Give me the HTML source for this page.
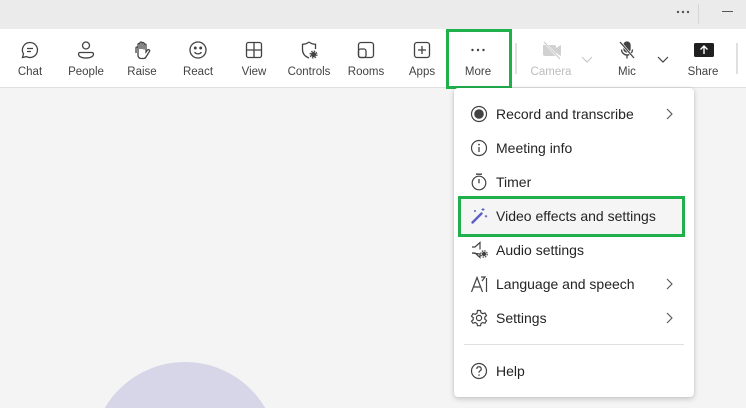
<!DOCTYPE html>
<html><head><meta charset="utf-8"><style>
*{margin:0;padding:0;box-sizing:border-box}
html,body{width:746px;height:408px;overflow:hidden}
body{background:#f4f4f4;font-family:"Liberation Sans",sans-serif;position:relative;color:#242424}
.wrap{position:absolute;left:0;top:0;width:746px;height:408px;overflow:hidden}
.top{position:absolute;left:0;top:0;width:746px;height:29px;background:#ebebeb}
.tb{position:absolute;left:0;top:29px;width:746px;height:59px;background:#fff;border-bottom:1px solid #e0e0e0}
.btn{position:absolute;top:29px;width:56px;height:59px;text-align:center}
.btn svg{position:absolute;left:18px;top:11px}
.btn span{position:absolute;left:0;right:0;top:37px;font-size:11.5px;color:#424242}
.cclip{position:absolute;left:92px;top:362px;width:186px;height:46px;overflow:hidden}
.circle{position:absolute;left:0;top:0;width:186px;height:186px;border-radius:50%;background:#d7d5e8}
.menu{position:absolute;left:454px;top:88px;width:240px;height:309px;background:#fff;border-radius:4px;box-shadow:0 2px 6px rgba(0,0,0,.18),0 0 2px rgba(0,0,0,.1)}
.it{position:absolute;left:496px;font-size:14px;color:#242424}
.ic{position:absolute;left:470px}
.chev{position:absolute;left:666px}
.green{position:absolute;border:3px solid #20b04b}
</style></head><body><div class="wrap">
<div class="top"></div>
<svg style="position:absolute;left:676px;top:10px" width="14" height="4"><circle cx="2" cy="2" r="1.2" fill="#555"/><circle cx="7" cy="2" r="1.2" fill="#555"/><circle cx="12" cy="2" r="1.2" fill="#555"/></svg>
<div style="position:absolute;left:698px;top:4px;width:1px;height:20px;background:#d6d6d6"></div>
<div style="position:absolute;left:722px;top:11px;width:11px;height:1px;background:#555"></div>
<div class="tb"></div>
<div class="cclip"><div class="circle"></div></div>

<div class="btn" style="left:2px"><svg width="20" height="20" viewBox="0 0 20 20" fill="none" stroke="#424242" stroke-width="1.3"><path d="M10 2.5a7.5 7.5 0 1 1-3.6 14.1L2.5 17.5l1-3.6A7.5 7.5 0 0 1 10 2.5z"/><path d="M7 8.5h6M7 11.5h4"/></svg><span>Chat</span></div>
<div class="btn" style="left:58px"><svg width="20" height="20" viewBox="0 0 20 20" fill="none" stroke="#424242" stroke-width="1.3"><circle cx="10" cy="5.5" r="3.5"/><path d="M4 12.5h12a1.5 1.5 0 0 1 1.5 1.5c0 2.5-3 4-7.5 4S2.5 16.5 2.5 14A1.5 1.5 0 0 1 4 12.5z"/></svg><span>People</span></div>
<div class="btn" style="left:114px"><svg width="20" height="20" viewBox="0 0 20 20" fill="none" stroke="#424242" stroke-width="1.3"><path d="M6 10V4.5a1 1 0 0 1 2 0V9M8 9V3a1 1 0 0 1 2 0v6M10 9V3.5a1 1 0 0 1 2 0V9M12 9.5V5a1 1 0 0 1 2 0v7l1.5-2a1.2 1.2 0 0 1 2 1.3L14 17a3 3 0 0 1-2.5 1.5H9a3 3 0 0 1-3-3V8a1 1 0 0 0-2 0v5"/></svg><span>Raise</span></div>
<div class="btn" style="left:170px"><svg width="20" height="20" viewBox="0 0 20 20" fill="none" stroke="#424242" stroke-width="1.3"><circle cx="10" cy="10" r="8"/><circle cx="7.3" cy="8" r=".8" fill="#424242"/><circle cx="12.7" cy="8" r=".8" fill="#424242"/><path d="M6.5 12.2c1.8 2.2 5.2 2.2 7 0"/></svg><span>React</span></div>
<div class="btn" style="left:226px"><svg width="20" height="20" viewBox="0 0 20 20" fill="none" stroke="#424242" stroke-width="1.3"><rect x="2.5" y="2.5" width="15" height="15" rx="2"/><path d="M10 2.5v15M2.5 10h15"/></svg><span>View</span></div>
<div class="btn" style="left:281px"><svg width="20" height="20" viewBox="0 0 20 20" fill="none" stroke="#424242" stroke-width="1.3"><path d="M10 2c2 1.5 4 2.3 6.5 2.3V9M10 18c-4-1.5-6.5-4-6.5-8.5V4.3C6 4.3 8 3.5 10 2"/><circle cx="14.5" cy="14.5" r="2.6" fill="#424242" stroke="none"/><circle cx="14.5" cy="14.5" r="3.4" stroke-dasharray="1.5 1.2"/></svg><span>Controls</span></div>
<div class="btn" style="left:338px"><svg width="20" height="20" viewBox="0 0 20 20" fill="none" stroke="#424242" stroke-width="1.3"><rect x="2.5" y="2.5" width="15" height="15" rx="2.5"/><rect x="2.5" y="9" width="7.5" height="8.5" rx="2"/></svg><span>Rooms</span></div>
<div class="btn" style="left:394px"><svg width="20" height="20" viewBox="0 0 20 20" fill="none" stroke="#424242" stroke-width="1.3"><rect x="2.5" y="2.5" width="15" height="15" rx="2.5"/><path d="M10 6v8M6 10h8"/></svg><span>Apps</span></div>
<div class="btn" style="left:450px"><svg width="20" height="20" viewBox="0 0 20 20"><circle cx="4.5" cy="10" r="1.2" fill="#424242"/><circle cx="10" cy="10" r="1.2" fill="#424242"/><circle cx="15.5" cy="10" r="1.2" fill="#424242"/></svg><span>More</span></div>
<div class="green" style="left:446px;top:29px;width:66px;height:60px"></div>
<div style="position:absolute;left:515px;top:43px;width:2px;height:31px;background:#e0e0e0"></div>
<div class="btn" style="left:523px"><svg width="22" height="20" viewBox="0 0 22 20"><path d="M2 5h11a2 2 0 0 1 2 2v7a2 2 0 0 1-2 2H4a2 2 0 0 1-2-2z" fill="#d1d1d1"/><path d="M15 8l5-3v11l-5-3z" fill="#d1d1d1"/><path d="M3 2l16 17" stroke="#fff" stroke-width="2.2"/><path d="M3 2l16 17" stroke="#c8c8c8" stroke-width="1"/></svg><span style="color:#bdbdbd">Camera</span></div>
<svg style="position:absolute;left:581px;top:56px" width="12" height="7"><path d="M1 1l5 5 5-5" fill="none" stroke="#c8c8c8" stroke-width="1.2"/></svg>
<div class="btn" style="left:599px"><svg width="20" height="20" viewBox="0 0 20 20" fill="none" stroke="#424242" stroke-width="1.3"><rect x="7" y="2" width="6" height="10" rx="3" fill="#424242"/><path d="M4.5 9.5a5.5 5.5 0 0 0 11 0M10 15v3.5"/><path d="M3 2l14 16" stroke="#fff" stroke-width="2.5"/><path d="M3 2l14 16"/></svg><span>Mic</span></div>
<svg style="position:absolute;left:657px;top:56px" width="12" height="7"><path d="M1 1l5 5 5-5" fill="none" stroke="#424242" stroke-width="1.2"/></svg>
<div class="btn" style="left:675px"><svg width="22" height="20" viewBox="0 0 22 20"><rect x="1" y="3" width="20" height="14" rx="1.5" fill="#1f1f1f"/><path d="M11 14V6.5M7.5 9.5L11 6l3.5 3.5" stroke="#fff" stroke-width="1.4" fill="none"/></svg><span>Share</span></div>
<div style="position:absolute;left:736px;top:43px;width:2px;height:31px;background:#e0e0e0"></div>

<div class="menu"></div>
<div style="position:absolute;left:461px;top:199px;width:221px;height:35px;background:#f5f5f5"></div>
<div class="green" style="left:458px;top:196px;width:227px;height:41px"></div>

<svg class="ic" style="top:105px" width="18" height="18" viewBox="0 0 18 18"><circle cx="9" cy="9" r="7.5" fill="none" stroke="#424242" stroke-width="1.2"/><circle cx="9" cy="9" r="4.8" fill="#424242"/></svg>
<div class="it" style="top:106px">Record and transcribe</div>
<svg class="chev" style="top:108px" width="7" height="12"><path d="M1 1l5 5-5 5" fill="none" stroke="#555" stroke-width="1.1"/></svg>

<svg class="ic" style="top:139px" width="18" height="18" viewBox="0 0 18 18"><circle cx="9" cy="9" r="7.5" fill="none" stroke="#424242" stroke-width="1.2"/><path d="M9 8v5" stroke="#424242" stroke-width="1.3"/><circle cx="9" cy="5.6" r=".9" fill="#424242"/></svg>
<div class="it" style="top:140px">Meeting info</div>

<svg class="ic" style="top:172px" width="18" height="19" viewBox="0 0 18 19"><circle cx="9" cy="11" r="6.8" fill="none" stroke="#424242" stroke-width="1.2"/><path d="M6 2.2h6M9 7v4.3" stroke="#424242" stroke-width="1.3"/></svg>
<div class="it" style="top:174px">Timer</div>

<svg class="ic" style="top:206px" width="19" height="19" viewBox="0 0 19 19"><path d="M2.5 16.5l9-9" stroke="#5b5fc7" stroke-width="2.4" stroke-linecap="round"/><path d="M13 2v3M11.5 3.5h3M16 9v2.5M14.8 10.2h2.4M5 4v2M4 5h2" stroke="#5b5fc7" stroke-width="1"/></svg>
<div class="it" style="top:208px">Video effects and settings</div>

<svg class="ic" style="top:240px" width="20" height="20" viewBox="0 0 20 20" fill="none" stroke="#424242" stroke-width="1.2"><path d="M2 7h3l5-4.5v7M10 14v3.5L5 13H2z"/><circle cx="14" cy="14" r="2.2" fill="#424242" stroke="none"/><circle cx="14" cy="14" r="3.2" stroke-dasharray="1.4 1.1"/></svg>
<div class="it" style="top:242px">Audio settings</div>

<svg class="ic" style="top:274px" width="20" height="20" viewBox="0 0 20 20" fill="none" stroke="#424242" stroke-width="1.2"><path d="M1.5 18L7 3.5 12.5 18M3.5 13h7"/><path d="M11 3h4l-3 4M16.5 4v14"/></svg>
<div class="it" style="top:276px">Language and speech</div>
<svg class="chev" style="top:278px" width="7" height="12"><path d="M1 1l5 5-5 5" fill="none" stroke="#555" stroke-width="1.1"/></svg>

<svg class="ic" style="top:309px" width="18" height="18" viewBox="0 0 18 18" fill="none" stroke="#424242" stroke-width="1.2"><path d="M7.5 1.5h3l.5 2.2 1.8 1 2.2-.7 1.5 2.6-1.7 1.5v2l1.7 1.5-1.5 2.6-2.2-.7-1.8 1-.5 2.2h-3l-.5-2.2-1.8-1-2.2.7L1.5 12.2l1.7-1.5v-2L1.5 7.2 3 4.6l2.2.7 1.8-1z"/><circle cx="9" cy="9" r="2.6"/></svg>
<div class="it" style="top:310px">Settings</div>
<svg class="chev" style="top:312px" width="7" height="12"><path d="M1 1l5 5-5 5" fill="none" stroke="#555" stroke-width="1.1"/></svg>

<div style="position:absolute;left:464px;top:344px;width:220px;height:1px;background:#e0e0e0"></div>
<svg class="ic" style="top:362px" width="18" height="18" viewBox="0 0 18 18"><circle cx="9" cy="9" r="7.5" fill="none" stroke="#424242" stroke-width="1.2"/><path d="M6.8 7a2.2 2.2 0 1 1 3 2c-.6.3-.8.7-.8 1.4v.4" fill="none" stroke="#424242" stroke-width="1.2"/><circle cx="9" cy="13" r=".8" fill="#424242"/></svg>
<div class="it" style="top:363px">Help</div>
</div></body></html>
